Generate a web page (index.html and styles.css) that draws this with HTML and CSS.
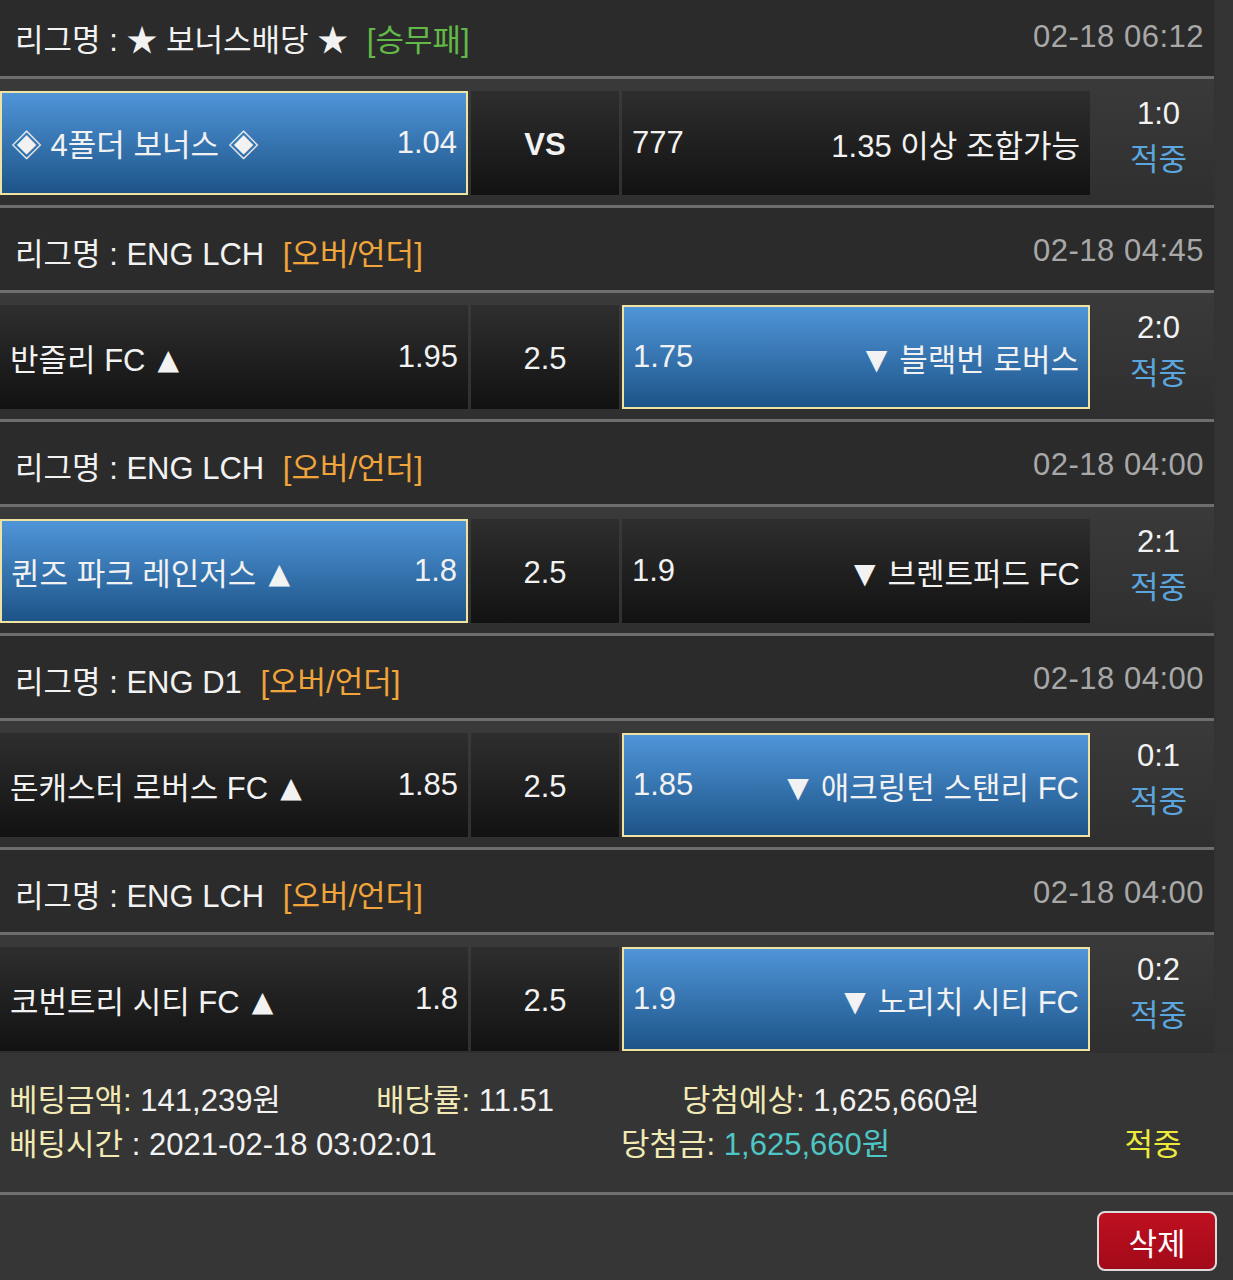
FILE: index.html
```html
<!DOCTYPE html>
<html lang="ko">
<head>
    <meta charset="UTF-8">
    <meta name="viewport" content="width=device-width, initial-scale=1.0">
    <title>베팅내역</title>
    <link rel="stylesheet" href="styles.css">
</head>
<body>
    <div class="bet-slip">
        <div class="bet-list">
            <!-- 1 -->
            <div class="league-head">
                <div class="league-name">리그명 : ★ 보너스배당 ★ <span class="type type-win">[승무패]</span></div>
                <div class="league-time">02-18 06:12</div>
            </div>
            <div class="bet-row">
                <div class="pick selected"><span>◈ 4폴더 보너스 ◈</span><span>1.04</span></div>
                <div class="mid mid-vs">VS</div>
                <div class="pick"><span>777</span><span>1.35 이상 조합가능</span></div>
                <div class="result"><span>1:0</span><span class="hit">적중</span></div>
            </div>

            <!-- 2 -->
            <div class="league-head">
                <div class="league-name">리그명 : ENG LCH <span class="type type-ou">[오버/언더]</span></div>
                <div class="league-time">02-18 04:45</div>
            </div>
            <div class="bet-row">
                <div class="pick"><span>반즐리 FC<span class="sym up">▲</span></span><span>1.95</span></div>
                <div class="mid">2.5</div>
                <div class="pick selected"><span>1.75</span><span><span class="sym down">▼</span>블랙번 로버스</span></div>
                <div class="result"><span>2:0</span><span class="hit">적중</span></div>
            </div>

            <!-- 3 -->
            <div class="league-head">
                <div class="league-name">리그명 : ENG LCH <span class="type type-ou">[오버/언더]</span></div>
                <div class="league-time">02-18 04:00</div>
            </div>
            <div class="bet-row">
                <div class="pick selected"><span>퀸즈 파크 레인저스<span class="sym up">▲</span></span><span>1.8</span></div>
                <div class="mid">2.5</div>
                <div class="pick"><span>1.9</span><span><span class="sym down">▼</span>브렌트퍼드 FC</span></div>
                <div class="result"><span>2:1</span><span class="hit">적중</span></div>
            </div>

            <!-- 4 -->
            <div class="league-head">
                <div class="league-name">리그명 : ENG D1 <span class="type type-ou">[오버/언더]</span></div>
                <div class="league-time">02-18 04:00</div>
            </div>
            <div class="bet-row">
                <div class="pick"><span>돈캐스터 로버스 FC<span class="sym up">▲</span></span><span>1.85</span></div>
                <div class="mid">2.5</div>
                <div class="pick selected"><span>1.85</span><span><span class="sym down">▼</span>애크링턴 스탠리 FC</span></div>
                <div class="result"><span>0:1</span><span class="hit">적중</span></div>
            </div>

            <!-- 5 -->
            <div class="league-head">
                <div class="league-name">리그명 : ENG LCH <span class="type type-ou">[오버/언더]</span></div>
                <div class="league-time">02-18 04:00</div>
            </div>
            <div class="bet-row last">
                <div class="pick"><span>코번트리 시티 FC<span class="sym up">▲</span></span><span>1.8</span></div>
                <div class="mid">2.5</div>
                <div class="pick selected"><span>1.9</span><span><span class="sym down">▼</span>노리치 시티 FC</span></div>
                <div class="result"><span>0:2</span><span class="hit">적중</span></div>
            </div>
        </div>

        <div class="summary">
            <div class="summary-line">
                <span class="cell cell-amount"><span class="label">베팅금액:</span> 141,239원</span>
                <span class="cell cell-rate"><span class="label">배당률:</span> 11.51</span>
                <span class="cell"><span class="label">당첨예상:</span> 1,625,660원</span>
            </div>
            <div class="summary-line">
                <span class="cell cell-time"><span class="label">배팅시간</span> : 2021-02-18 03:02:01</span>
                <span class="cell cell-win"><span class="label">당첨금:</span> <span class="win-amount">1,625,660원</span></span>
                <span class="cell cell-status">적중</span>
            </div>
        </div>

        <div class="slip-footer">
            <button type="button" class="btn-delete">삭제</button>
        </div>
    </div>
</body>
</html>
```

FILE: styles.css
```css
* {
    box-sizing: border-box;
}

html, body {
    margin: 0;
    padding: 0;
    height: 100%;
    background-color: #333333;
    font-family: 'Liberation Sans', 'Noto Sans CJK KR', sans-serif;
    font-size: 31px;
    color: #f2f2f2;
}

.bet-slip {
    margin-top: -6px;
    overflow: hidden;
}

.bet-list {
    width: 1214px;
}

.sym {
    font-family: 'DejaVu Sans', sans-serif;
    font-size: 28px;
    vertical-align: 2px;
}

.sym.up {
    margin-left: 12px;
}

.sym.down {
    margin-right: 12px;
}

/* league header */
.league-head {
    height: 85px;
    display: flex;
    align-items: center;
    justify-content: space-between;
    padding: 4px 10px 0 15px;
    background-color: #2b2b2b;
    border-bottom: 3px solid #6e6e6e;
}

.type {
    margin-left: 10px;
}

.type-win {
    color: #63b947;
}

.type-ou {
    color: #f0a43a;
}

.league-time {
    color: #a8a8a8;
    letter-spacing: 0.5px;
}

/* bet row */
.bet-row {
    display: grid;
    grid-template-columns: 468px 148px 468px 1fr;
    column-gap: 3px;
    height: 129px;
    padding: 12px 0 10px;
    background: linear-gradient(#3a3a3a, #2f2f2f);
    border-bottom: 3px solid #6e6e6e;
}

.bet-row.last {
    height: 118px;
    padding-bottom: 0;
    border-bottom: none;
}

.pick,
.mid {
    height: 104px;
    background: linear-gradient(#2e2e2e, #121212);
}

.pick {
    display: flex;
    align-items: center;
    justify-content: space-between;
    padding: 0 10px 0 10px;
}

.pick.selected {
    background: linear-gradient(#4f95d8, #1d5488);
    border: 2px solid #efe2a2;
    padding: 0 9px 0 9px;
}

.mid {
    display: flex;
    align-items: center;
    justify-content: center;
    padding-top: 4px;
}

.mid-vs {
    font-weight: bold;
}

.result {
    display: flex;
    flex-direction: column;
    align-items: center;
    justify-content: center;
    line-height: 46px;
    padding: 0 0 16px 10px;
}

.hit {
    color: #5ba6de;
}

/* summary */
.summary {
    height: 142px;
    padding: 26px 0 0 9px;
    background-color: #353535;
    border-bottom: 3px solid #707070;
}

.summary-line {
    display: flex;
    line-height: 44px;
    white-space: nowrap;
}

.label {
    color: #f1eab4;
}

.cell-amount {
    width: 367px;
}

.cell-rate {
    width: 306px;
}

.cell-time {
    width: 612px;
}

.cell-win {
    width: 470px;
}

.cell-status {
    width: 124px;
    text-align: center;
    color: #eeea3c;
}

.win-amount {
    color: #4fc6c6;
}

/* footer */
.slip-footer {
    display: flex;
    justify-content: flex-end;
    padding: 16px 16px 0 0;
    height: 90px;
    background-color: #363636;
}

.btn-delete {
    width: 120px;
    height: 60px;
    border: 2px solid #dcdcdc;
    border-radius: 8px;
    background: linear-gradient(#bf1020, #a20a19);
    color: #ffffff;
    font-family: inherit;
    font-size: 31px;
    padding: 0;
    cursor: pointer;
}
```
